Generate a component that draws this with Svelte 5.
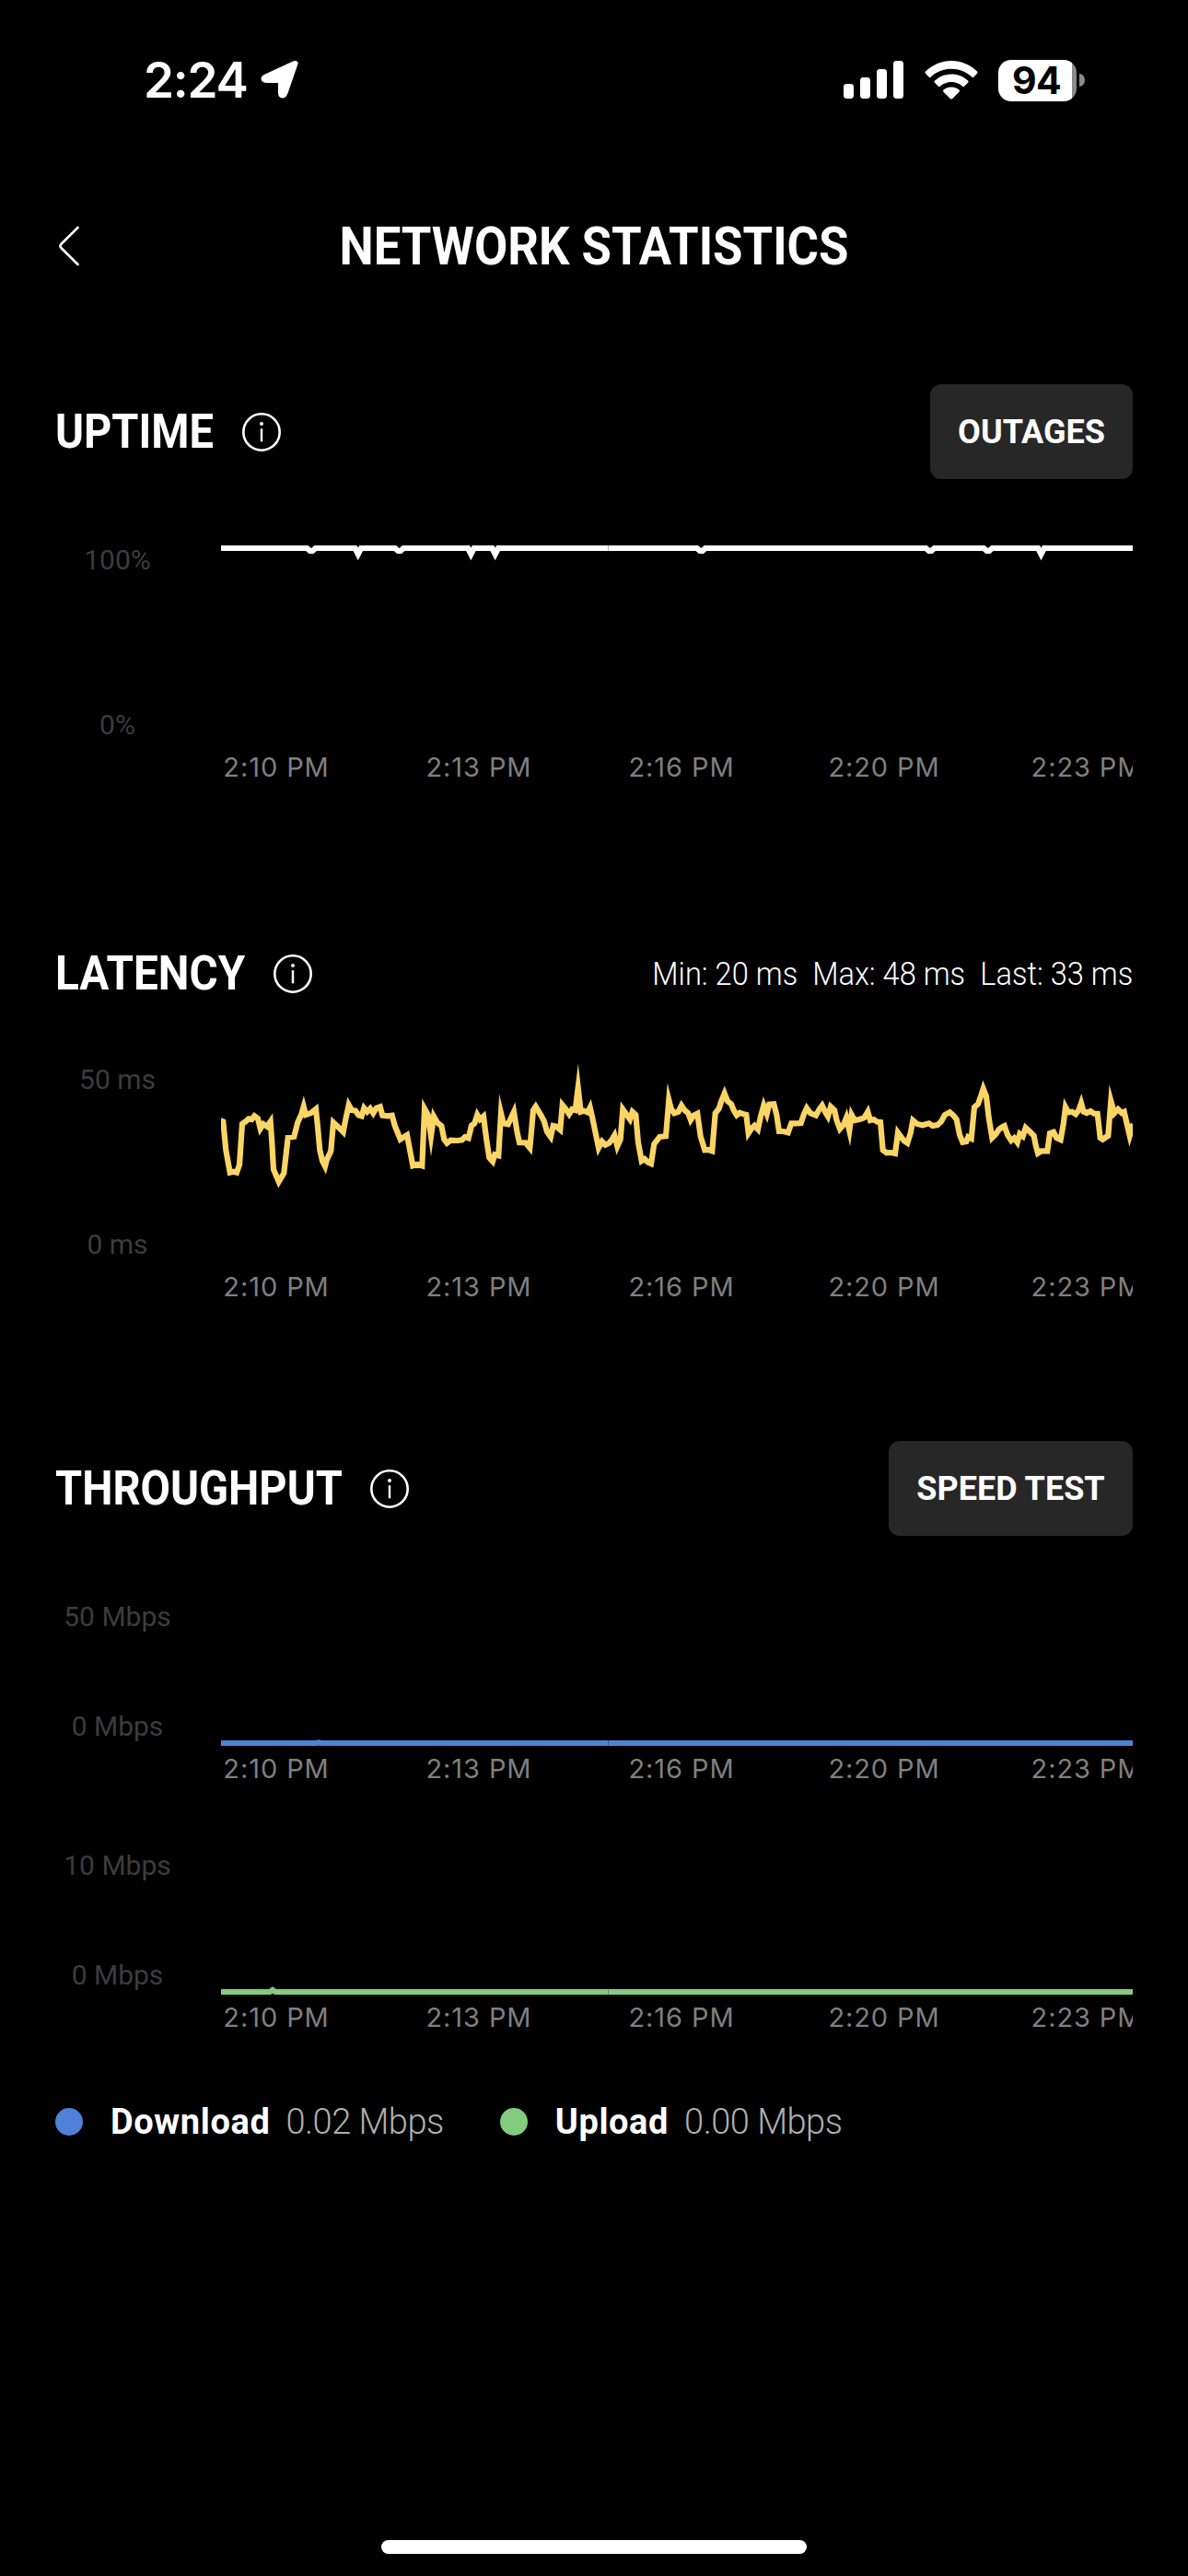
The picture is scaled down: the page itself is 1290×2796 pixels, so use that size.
<script>
	const times = ['2:10 PM', '2:13 PM', '2:16 PM', '2:20 PM', '2:23 PM'];

	// Latency samples come in three batches, x/y in thirds of a pixel
	const latencyBatches = [
		{
			offset: -30,
			points: [
				[28, 228], [37, 232], [46, 325], [59, 398], [70, 395], [81, 398], [90, 373], [99, 240], [110, 232], [120, 223],
				[130, 225], [139, 214], [150, 222], [158, 255], [168, 240], [180, 248], [191, 232], [196, 300], [201, 388],
				[218, 428], [235, 400], [248, 284], [268, 281], [280, 235], [292, 208], [299, 183], [306, 210], [322, 205],
				[339, 191], [345, 250], [352, 325], [360, 360], [369, 378], [375, 355], [388, 328], [396, 235], [412, 250],
				[428, 266], [436, 225], [446, 178], [456, 195], [468, 197], [478, 211], [488, 214], [496, 188], [506, 200],
				[516, 190], [526, 205], [536, 188], [548, 184], [556, 212], [572, 214], [587, 212], [596, 245], [614, 290],
				[636, 276], [655, 376], [670, 371], [685, 376], [693, 190], [704, 210], [714, 280], [723, 215], [734, 235],
				[748, 246], [757, 290], [766, 302], [778, 293], [800, 294], [815, 292], [825, 282], [836, 286], [846, 245],
				[856, 238], [865, 210], [874, 225], [885, 215], [894, 285], [904, 350], [915, 362], [922, 340], [934, 343],
				[942, 205], [950, 238], [965, 241], [984, 200], [995, 270]
			]
		},
		{
			offset: 960,
			points: [
				[12, 300], [32, 301], [46, 318], [52, 255], [57, 195], [65, 183], [80, 208], [92, 230], [102, 265], [114, 282],
				[122, 246], [132, 248], [145, 259], [152, 178], [162, 190], [174, 208], [184, 192], [194, 195], [203, 122],
				[212, 200], [222, 197], [234, 202], [242, 186], [250, 220], [260, 270], [270, 318], [281, 297], [292, 308],
				[304, 302], [314, 290], [322, 277], [331, 313], [341, 290], [349, 192], [358, 205], [372, 225], [380, 200],
				[391, 210], [399, 300], [410, 360], [420, 354], [430, 364], [441, 369], [451, 305], [469, 282], [489, 280],
				[499, 162], [506, 190], [516, 205], [530, 200], [540, 180], [550, 195], [562, 205], [570, 227], [580, 212],
				[592, 206], [602, 280], [616, 325], [628, 324], [640, 328], [650, 205], [662, 190], [670, 165], [680, 140],
				[690, 165], [702, 175], [710, 195], [720, 211], [730, 203], [742, 208], [751, 210], [758, 270], [768, 255],
				[778, 245], [789, 257], [798, 215], [808, 180], [818, 207], [826, 176], [841, 175], [850, 210], [858, 264],
				[872, 264], [887, 268], [898, 238], [914, 238], [929, 237], [940, 205], [948, 188], [960, 205], [978, 212],
				[989, 192]
			]
		},
		{
			offset: 1950,
			points: [
				[8, 180], [18, 200], [27, 215], [36, 184], [48, 195], [56, 230], [66, 256], [78, 242], [87, 220], [97, 262],
				[104, 210], [114, 228], [130, 225], [145, 220], [157, 200], [165, 228], [176, 225], [188, 233], [198, 234],
				[206, 325], [218, 334], [232, 333], [246, 336], [255, 268], [264, 280], [275, 295], [286, 302], [296, 270],
				[304, 228], [318, 240], [335, 244], [356, 238], [368, 246], [384, 243], [396, 232], [408, 210], [424, 202],
				[436, 212], [446, 225], [456, 275], [466, 299], [478, 297], [484, 282], [494, 287], [504, 185], [516, 175],
				[525, 150], [533, 125], [543, 150], [551, 220], [562, 285], [572, 275], [584, 258], [594, 250], [602, 246],
				[612, 275], [624, 294], [634, 286], [644, 300], [652, 272], [662, 280], [671, 252], [684, 264], [698, 278],
				[704, 310], [711, 335], [722, 328], [742, 328], [750, 270], [762, 266], [772, 285], [785, 291], [794, 240],
				[801, 185], [810, 202], [822, 200], [834, 208], [844, 195], [852, 172], [860, 200], [870, 204], [882, 198],
				[894, 206], [905, 207], [914, 285], [922, 290], [940, 278], [949, 165], [960, 205], [972, 192], [984, 204],
				[992, 200], [1000, 235], [1010, 278], [1018, 252], [1028, 262]
			]
		}
	];

	const latencyPoints = latencyBatches
		.flatMap((b) => b.points.map(([x, y]) => `${((x + b.offset) / 3).toFixed(1)},${(y / 3).toFixed(1)}`))
		.join(' ');

	// Short dips are flat at the bottom, long ones run to a point
	const dips = [
		{ x: 98, long: false },
		{ x: 148.8, long: true },
		{ x: 193.6, long: false },
		{ x: 271.4, long: true },
		{ x: 297.7, long: true },
		{ x: 521.4, long: false },
		{ x: 770, long: false },
		{ x: 832.8, long: false },
		{ x: 890.5, long: true }
	];

	const uptimePoints = [
		'0,19',
		...dips.map(({ x, long }) =>
			long
				? `${x - 3.3},19 ${x},25.5 ${x + 3.3},19`
				: `${x - 4.6},19 ${x - 1.3},22 ${x + 1.3},22 ${x + 4.6},19`
		),
		'990,19'
	].join(' ');

	const uptime = { max: '100%', min: '0%', height: 240, color: '#ffffff', points: uptimePoints, seam: 19 };
	const latency = { max: '50 ms', min: '0 ms', height: 240, color: '#fad566', points: latencyPoints };
	const download = {
		max: '50 Mbps', min: '0 Mbps', height: 173, color: '#5080d8', seam: 162, short: true,
		points: '0,162 103,162 106,161.4 109,162 990,162'
	};
	const upload = {
		max: '10 Mbps', min: '0 Mbps', height: 173, color: '#83cb7f', seam: 162, short: true,
		points: '0,162 53,162 56,160 59,162 990,162'
	};

	const stats = ['Min: 20 ms', 'Max: 48 ms', 'Last: 33 ms'];
</script>

{#snippet info()}
	<svg class="info" width="42" height="42" viewBox="0 0 42 42">
		<circle cx="21" cy="21" r="19.7" fill="none" stroke="#fff" stroke-width="2.6" />
		<circle cx="21" cy="12" r="2" fill="#fff" />
		<path d="M21 18.2V30.2" stroke="#fff" stroke-width="2.4" stroke-linecap="round" />
	</svg>
{/snippet}

{#snippet chart(c)}
	<div class="chart">
		<div class="scale" class:short={c.short}>
			<span>{c.max}</span>
			<span>{c.min}</span>
		</div>
		<div class="plot">
			<svg width="990" height={c.height} viewBox="0 0 990 {c.height}">
				<polyline points={c.points} fill="none" stroke={c.color} stroke-width="6.2" stroke-miterlimit="10" />
				{#if c.seam}
					<rect x="420" y={c.seam - 3} width="1" height="6" fill="#000" opacity="0.3" />
				{/if}
			</svg>
			<div class="times">
				{#each times as time}
					<span>{time}</span>
				{/each}
			</div>
		</div>
	</div>
{/snippet}

<div class="screen">
	<div class="status-bar">
		<div class="clock">
			<span>2:24</span>
			<svg width="42" height="42" viewBox="0 0 42 42">
				<path d="M39 2.5L28 34.5Q26 40 22.5 38.5Q20.6 37.7 20.6 34V22.2H7Q2.8 22.2 2.3 19.8Q1.9 17.6 5.5 16L36 2Q38.5 1 39 2.5Z" fill="#fff" stroke="#fff" stroke-width="3.4" stroke-linejoin="round" />
			</svg>
		</div>
		<div class="indicators">
			<svg width="66" height="42" viewBox="0 0 66 42">
				<rect x="0" y="25" width="11" height="16" rx="3.4" fill="#fff" />
				<rect x="18" y="18" width="11" height="23" rx="3.4" fill="#fff" />
				<rect x="36" y="9" width="11" height="32" rx="3.4" fill="#fff" />
				<rect x="54" y="0" width="11" height="41" rx="3.4" fill="#fff" />
			</svg>
			<svg class="wifi" width="58" height="42" viewBox="0 0 58 42">
				<path d="M29 0C40 0 50 4.5 57 11.5Q58 12.7 57 13.8L53.5 17.5Q52.5 18.5 51.3 17.5C45 11.7 37.5 8.8 29 8.8S13 11.7 6.7 17.5Q5.5 18.5 4.5 17.5L1 13.8Q0 12.7 1 11.5C8 4.5 18 0 29 0Z" fill="#fff" />
				<path d="M29 14.5C36 14.5 42 17 47 21.5Q48.2 22.7 47 23.8L43.3 27.5Q42.2 28.5 41 27.5C37.5 24.5 33.5 23 29 23S20.5 24.5 17 27.5Q15.8 28.5 14.7 27.5L11 23.8Q9.8 22.7 11 21.5C16 17 22 14.5 29 14.5Z" fill="#fff" />
				<path d="M29 28.5C32.5 28.5 35 29.5 37.5 31.5Q38.6 32.6 37.5 33.7L30 41.2Q29 42 28 41.2L20.5 33.7Q19.4 32.6 20.5 31.5C23 29.5 25.5 28.5 29 28.5Z" fill="#fff" />
			</svg>
			<div class="battery">
				<div class="level">94</div>
				<div class="nub"></div>
			</div>
		</div>
	</div>

	<header class="nav">
		<svg class="back" width="24" height="44" viewBox="0 0 24 44">
			<path d="M21.5 2L3.3 20Q1.5 22 3.3 24L21.5 42" fill="none" stroke="#fff" stroke-width="2.6" stroke-linecap="round" />
		</svg>
		<h1>NETWORK STATISTICS</h1>
	</header>

	<section class="uptime">
		<div class="section-header">
			<h2>UPTIME</h2>
			{@render info()}
			<button>OUTAGES</button>
		</div>
		{@render chart(uptime)}
	</section>

	<section class="latency">
		<div class="section-header">
			<h2>LATENCY</h2>
			{@render info()}
			<div class="stats">
				{#each stats as stat}
					<span>{stat}</span>
				{/each}
			</div>
		</div>
		{@render chart(latency)}
	</section>

	<section class="throughput">
		<div class="section-header">
			<h2>THROUGHPUT</h2>
			{@render info()}
			<button class="speed">SPEED TEST</button>
		</div>
		{@render chart(download)}
		{@render chart(upload)}
		<div class="legend">
			<i class="dot download"></i>
			<b>Download</b>
			<span class="value">0.02 Mbps</span>
			<i class="dot upload"></i>
			<b>Upload</b>
			<span class="value">0.00 Mbps</span>
		</div>
	</section>

	<div class="home-indicator"></div>
</div>

<style>
	:global(body) { background: #000; }

	.screen {
		display: flex;
		flex-direction: column;
		width: 1290px;
		height: 2796px;
		overflow: hidden;
		background: #000;
		color: #fff;
		font-family: Roboto, "Liberation Sans", sans-serif;
	}
	.screen svg { display: block; flex: none; }
	span, b, h1, h2 { white-space: nowrap; }

	/* Status bar */
	.status-bar {
		display: flex;
		justify-content: space-between;
		align-items: center;
		height: 174px;
		padding: 0 112px 0 156px;
		font-family: Inter, sans-serif;
	}
	.clock { display: flex; align-items: center; gap: 14px; font-size: 53px; font-weight: 600; letter-spacing: -1.2px; }
	.indicators { display: flex; align-items: center; }
	.wifi { margin-left: 22px; }
	.battery { display: flex; align-items: center; gap: 3px; margin-left: 22px; }
	.level {
		width: 85px;
		height: 45px;
		border-radius: 14px;
		background: linear-gradient(to right, #fff 80px, #8a8a8a 80px);
		color: #000;
		font-size: 41px;
		font-weight: 700;
		line-height: 44px;
		text-align: center;
		text-indent: -2px;
		letter-spacing: -0.8px;
	}
	.nub { width: 6px; height: 14px; border-radius: 0 6px 6px 0 / 0 7px 7px 0; background: #8a8a8a; }

	/* Title */
	.nav {
		display: grid;
		grid-template-columns: 24px 1fr 24px;
		align-items: center;
		height: 186px;
		padding: 0 63px;
	}
	/* The headings are set slightly condensed */
	h1 { margin: 0; font-size: 58px; font-weight: 700; text-align: center; transform: scaleX(0.908); }
	h2 { width: 170px; margin: 0; font-size: 52px; font-weight: 700; transform: scaleX(0.905); transform-origin: left; }
	.latency h2 { width: 204px; transform: scaleX(0.917); }
	.throughput h2 { width: 309px; }

	/* Sections */
	section { padding: 0 60px; }
	.section-header { display: flex; align-items: center; height: 103px; }
	.uptime { margin-top: 57px; }
	.latency { margin-top: 156px; }
	.throughput { margin-top: 151px; }
	.info { margin-left: 33px; }
	button {
		width: 220px;
		height: 103px;
		margin-left: auto;
		padding: 0;
		border: none;
		border-radius: 12px;
		background: #272727;
		color: #fff;
		font: 700 36px Roboto, sans-serif;
	}
	.speed { width: 265px; }
	.stats { display: flex; gap: 17px; margin-left: auto; font-size: 34.5px; font-weight: 350; transform: scaleX(0.945); transform-origin: right; }

	/* Charts */
	.chart { display: flex; justify-content: space-between; }
	.uptime .chart { margin-top: 56px; }
	.latency .chart { margin-top: 32px; }
	.throughput .chart { margin-top: 63px; }
	.throughput .chart + .chart { margin-top: 64px; }
	.scale {
		display: flex;
		flex-direction: column;
		justify-content: space-between;
		box-sizing: border-box;
		width: 135px;
		height: 240px;
		padding: 14px 0 11px;
		color: #3c3c3c;
		font-size: 30px;
		line-height: 36px;
		text-align: center;
	}
	.scale.short { height: 173px; padding: 7px 0 11px; }
	.plot { width: 990px; overflow: hidden; }
	.times {
		display: grid;
		grid-template-columns: repeat(5, 220px);
		width: 1100px;
		margin-left: -50px;
		color: #7f7f7f;
		font-family: Inter, sans-serif;
		font-size: 29px;
		line-height: 33px;
		text-align: center;
		letter-spacing: 0.9px;
	}

	/* Legend */
	.legend { display: flex; align-items: center; height: 50px; margin-top: 72px; font-size: 38px; }
	.dot { width: 30px; height: 30px; border-radius: 50%; }
	.dot.download { background: #5080d8; }
	.dot.upload { margin-left: 61px; background: #83cb7f; }
	.legend b { margin-left: 30px; font-weight: 700; letter-spacing: 0.6px; }
	.value { margin-left: 17px; color: #b0b0b0; font-weight: 350; letter-spacing: -0.5px; }

	.home-indicator { width: 462px; height: 15px; margin: auto auto 24px; border-radius: 8px; background: #fff; }
</style>
